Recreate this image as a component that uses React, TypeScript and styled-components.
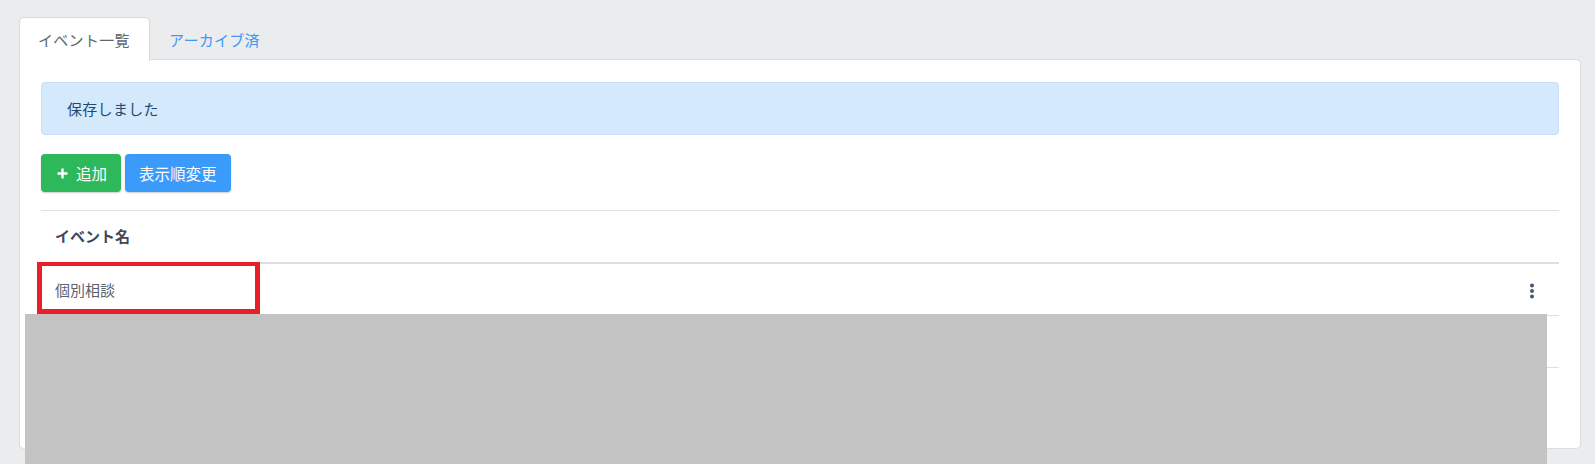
import React from 'react';
import styled, { createGlobalStyle } from 'styled-components';

const GlobalStyle = createGlobalStyle`
  html, body {
    margin: 0;
    padding: 0;
    background: #ebecee;
  }
  body {
    font-family: "Noto Sans CJK JP", "Noto Sans", "Liberation Sans", sans-serif;
    font-size: 15px;
    color: #495057;
  }
  * { box-sizing: border-box; }
`;

const Page = styled.div`
  position: relative;
  width: 1595px;
  height: 464px;
  padding: 17px 14px 0 19px;
  overflow: hidden;
`;

const TabList = styled.div`
  display: flex;
  height: 43px;
  margin-bottom: -1px;
  position: relative;
  z-index: 1;
`;

const Tab = styled.div<{ $active?: boolean }>`
  display: flex;
  align-items: center;
  height: 44px;
  padding: 0 18px 1px 18px;
  width: ${p => (p.$active ? '131px' : 'auto')};
  border: 1px solid ${p => (p.$active ? '#d5d8dc' : 'transparent')};
  border-bottom: none;
  border-radius: 5px 5px 0 0;
  background: ${p => (p.$active ? '#ffffff' : 'transparent')};
  color: ${p => (p.$active ? '#5f6670' : '#3d97f5')};
  font-size: 15px;
  letter-spacing: 0.3px;
`;

const Card = styled.div`
  background: #ffffff;
  border: 1px solid #d9dce0;
  border-radius: 0 5px 5px 5px;
  height: 390px;
  padding: 22px 21px;
`;

const Alert = styled.div`
  height: 53px;
  display: flex;
  align-items: center;
  padding: 0 25px;
  background: #d5e9fc;
  border: 1px solid #c6def8;
  border-radius: 4px;
  color: #1f4a72;
  font-size: 15px;
  letter-spacing: 0.3px;
`;

const Toolbar = styled.div`
  display: flex;
  gap: 4px;
  margin-top: 19px;
`;

const Button = styled.button<{ $color: string }>`
  display: flex;
  align-items: center;
  gap: 8px;
  height: 38px;
  padding: 0 14px;
  border: none;
  border-radius: 4px;
  background: ${p => p.$color};
  color: #ffffff;
  font-family: inherit;
  font-size: 15.5px;
  box-shadow: 0 1px 2px rgba(0, 0, 0, 0.2);
`;

const Plus = styled.svg`
  width: 11px;
  height: 11px;
  margin-left: 2px;
`;

const Table = styled.div`
  margin-top: 18px;
  width: 100%;
`;

const HeadRow = styled.div`
  display: flex;
  align-items: center;
  height: 54px;
  padding: 0 14px 2px;
  border-top: 1px solid #dcdfe3;
  border-bottom: 2px solid #dcdfe3;
  font-weight: 700;
  color: #3e4856;
  font-size: 15px;
`;

const Row = styled.div<{ $first?: boolean }>`
  display: flex;
  align-items: center;
  justify-content: space-between;
  height: ${p => (p.$first ? '51px' : '52px')};
  padding: 0 24px 0 14px;
  border-top: ${p => (p.$first ? 'none' : '1px solid #dcdfe3')};
  color: #5a6270;
  font-size: 15px;
`;

const Kebab = styled.svg`
  width: 6px;
  height: 16px;
  margin-top: 2px;
`;

const Highlight = styled.div`
  position: absolute;
  left: 37px;
  top: 262px;
  width: 223px;
  height: 52px;
  border: 5px solid #e81f28;
  border-top-width: 4.5px;
  pointer-events: none;
`;

const Redaction = styled.div`
  position: absolute;
  left: 25px;
  top: 314px;
  width: 1522px;
  height: 160px;
  background: #c3c3c3;
`;

const PlusIcon = () => (
  <Plus viewBox="0 0 11 11">
    <path d="M5.5 0.5v10M0.5 5.5h10" stroke="#fff" strokeWidth="2.4" />
  </Plus>
);

const KebabIcon = () => (
  <Kebab viewBox="0 0 6 16">
    <circle cx="3" cy="2.5" r="2" fill="#46586e" />
    <circle cx="3" cy="8" r="2" fill="#46586e" />
    <circle cx="3" cy="13.5" r="2" fill="#46586e" />
  </Kebab>
);

const events = ['個別相談', '', ''];

export default function App() {
  return (
    <>
      <GlobalStyle />
      <Page>
        <TabList>
          <Tab $active>イベント一覧</Tab>
          <Tab>アーカイブ済</Tab>
        </TabList>
        <Card>
          <Alert>保存しました</Alert>
          <Toolbar>
            <Button $color="#2eb85c">
              <PlusIcon />
              追加
            </Button>
            <Button $color="#3a9bfa">表示順変更</Button>
          </Toolbar>
          <Table>
            <HeadRow>イベント名</HeadRow>
            {events.map((name, i) => (
              <Row key={i} $first={i === 0}>
                <span>{name}</span>
                {name && <KebabIcon />}
              </Row>
            ))}
          </Table>
        </Card>
        <Highlight />
        <Redaction />
      </Page>
    </>
  );
}
